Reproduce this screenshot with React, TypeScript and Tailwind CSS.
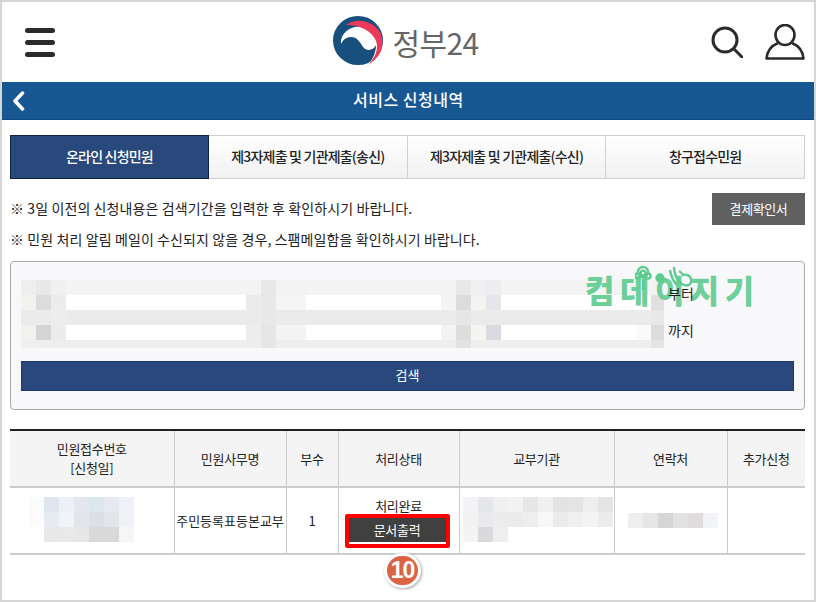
const KR = "font-['Noto_Sans_CJK_KR','Noto_Sans',sans-serif]"

const tabs = ['제3자제출 및 기관제출(송신)', '제3자제출 및 기관제출(수신)', '창구접수민원']

// blurred form fields, 15px mosaic blocks
const formMosaic = [
  ['bg-[#eeeeee]', 'bg-[#e8e8e8]', 'bg-[#f0f0f2]', 'bg-[#f4f4f4]', 'bg-[#f3f3f3]', 'bg-[#e8e8e8]', 'bg-[#f3f3f3]', 'bg-[#f4f4f4]', 'bg-[#f4f4f4]', 'bg-[#e8e8e8]', 'bg-[#f0f0f0]', 'bg-[#ecedf0]', 'bg-[#f4f4f4]', 'bg-[#f4f4f4]', 'bg-[#f2f2f2]'],
  ['bg-[#f2f2ef]', 'bg-[#dcdcdc]', 'bg-[#ececee]', 'bg-white', 'bg-[#ebebeb]', 'bg-[#e8e8e8]', 'bg-[#f5f5f5]', 'bg-white', 'bg-[#f4f4f4]', 'bg-[#dcdcdc]', 'bg-[#f3f3f1]', 'bg-[#e6e6ea]', 'bg-white', 'bg-white', 'bg-[#e0e0e0]'],
  ['bg-[#ebebeb]', 'bg-[#ebebeb]', 'bg-[#ededed]', 'bg-[#ebebeb]', 'bg-[#ebebeb]', 'bg-[#e8e8e8]', 'bg-[#ebebeb]', 'bg-[#ebebeb]', 'bg-[#ebebeb]', 'bg-[#e6e6e6]', 'bg-[#ebebeb]', 'bg-[#ebebeb]', 'bg-[#ebebeb]', 'bg-[#ebebeb]', 'bg-[#e8e8e8]'],
  ['bg-[#f1f1ee]', 'bg-[#d4d4d4]', 'bg-[#ececee]', 'bg-white', 'bg-[#ededed]', 'bg-[#e6e6e6]', 'bg-[#f3f3f3]', 'bg-white', 'bg-[#f3f3f3]', 'bg-[#dddddd]', 'bg-[#f4f4f0]', 'bg-[#dadbe1]', 'bg-white', 'bg-[#fafafa]', 'bg-[#dcdcdc]'],
  ['bg-[#efefef]', 'bg-[#eeeeee]', 'bg-[#eeeeee]', 'bg-[#eeeeee]', 'bg-[#eeeeee]', 'bg-[#e6e6e6]', 'bg-[#eeeeee]', 'bg-[#eeeeee]', 'bg-[#eeeeee]', 'bg-[#e2e2e2]', 'bg-[#eeeeee]', 'bg-[#eeeeee]', 'bg-[#eeeeee]', 'bg-[#eeeeee]', 'bg-[#e4e4e4]'],
]

const receiptMosaic = [
  ['bg-[#fafbfc]', 'bg-[#dfe6ef]', 'bg-[#edf1f6]', 'bg-[#e4e8ee]', 'bg-[#dde5ee]', 'bg-[#e6eaf0]', 'bg-[#eef2f7]', 'bg-white'],
  ['bg-[#fbfbfc]', 'bg-[#e6ebf2]', 'bg-[#f0f3f7]', 'bg-[#e2e5ea]', 'bg-[#dbdfe6]', 'bg-[#e3e5e9]', 'bg-[#eef2f6]', 'bg-white'],
  ['bg-white', 'bg-[#e8e8e8]', 'bg-[#e9e9e9]', 'bg-[#e7e7e6]', 'bg-[#d9d9d9]', 'bg-[#d9d9d9]', 'bg-[#f6f6f6]', 'bg-white'],
]

const orgMosaic = [
  ['bg-[#f4f4f6]', 'bg-[#e6e7ea]', 'bg-[#f0f0f1]', 'bg-[#f2f2f2]', 'bg-[#e6e6e6]', 'bg-[#f0f0f0]', 'bg-[#e3e3e3]', 'bg-[#e4e4e4]', 'bg-[#eeeef0]', 'bg-[#e4e4e4]'],
  ['bg-[#f2f2f3]', 'bg-[#eaeaec]', 'bg-[#ececec]', 'bg-[#ebebea]', 'bg-[#eeeeee]', 'bg-[#f8f8f8]', 'bg-[#ebebeb]', 'bg-[#f0f0f0]', 'bg-[#f4f4f6]', 'bg-[#ececec]'],
  ['bg-[#f4f4f5]', 'bg-[#dadadc]', 'bg-[#eeeeee]', 'bg-white', 'bg-white', 'bg-white', 'bg-white', 'bg-white', 'bg-white', 'bg-white'],
]

const phoneMosaic = [['bg-[#eeeeee]', 'bg-[#e6e6e6]', 'bg-[#d6d6d6]', 'bg-[#e2e2e2]', 'bg-[#dedcdc]', 'bg-[#f2f3f6]']]

function Mosaic({ rows }: { rows: string[][] }) {
  return (
    <div className="flex flex-col">
      {rows.map((row, i) => (
        <div key={i} className="flex">
          {row.map((c, j) => (
            <div key={j} className={`h-[15px] w-[15px] ${c}`} />
          ))}
        </div>
      ))}
    </div>
  )
}

function FormMosaic() {
  const widths = ['w-[15px]', 'w-[15px]', 'w-[15px]', 'w-[180px]', 'w-[15px]', 'w-[15px]', 'w-[30px]', 'w-[135px]', 'w-[15px]', 'w-[15px]', 'w-[15px]', 'w-[15px]', 'w-[135px]', 'w-[15px]', 'w-[13px]']
  const heights = ['h-[15px]', 'h-[15px]', 'h-[15px]', 'h-[15px]', 'h-[8px]']
  return (
    <div className="flex flex-col">
      {formMosaic.map((row, i) => (
        <div key={i} className="flex">
          {row.map((c, j) => (
            <div key={j} className={`${widths[j]} ${heights[i]} ${c}`} />
          ))}
        </div>
      ))}
    </div>
  )
}

function Logo() {
  return (
    <div className="flex items-center gap-[9px]">
      <svg width="50" height="49" viewBox="0 0 50 49">
        <ellipse cx="25" cy="24.5" rx="25" ry="24.5" fill="#174f7e" />
        <path d="M8 28C7 17 18 9 29 11C38 13 46 23 45 30C44 38 41 43 36 48C41 41 43 35 43 29C41 34 34 36 30 31C27 26 24 21 18 21C13 21 10 24 8 28Z" fill="#ffffff" />
        <path d="M13 9C24 1 40 5 47 16C52 27 50 40 35 49C42 42 46 33 43 25C39 14 24 8 13 9Z" fill="#ee3a5a" />
      </svg>
      <span className="mt-[4px] text-[30px] leading-none tracking-[-0.6px] text-[#666666]">정부24</span>
    </div>
  )
}

function Watermark() {
  return (
    <div className="absolute left-[583px] top-[263px] h-[46px] w-[176px]">
      <span className="absolute left-0 top-[2px] text-[32px] leading-[44px] font-black tracking-[5.5px] whitespace-nowrap text-[#5ecb8f] opacity-90">컴데이지기</span>
      <svg className="absolute left-[50px] top-0" width="60" height="26" viewBox="0 0 60 26" fill="none" stroke="#5ecb8f" strokeWidth="2.4">
        <circle cx="8" cy="8" r="2.4" />
        <circle cx="8" cy="7" r="5" />
        <circle cx="3" cy="11" r="2.6" />
        <circle cx="13" cy="11" r="2.6" />
        <path d="M8 14v11" />
        <circle cx="25" cy="13" r="3.5" fill="#5ecb8f" />
        <path d="M39 2c0 7 2 12 8 17 5 3 10 1 9-5-1-4-5-5-8-4-2-3-4-4-4-4M35 5c1 6 3 11 7 15" />
      </svg>
    </div>
  )
}

const colHeads = [
  { w: 'w-[164px]', label: ['민원접수번호', '[신청일]'] },
  { w: 'w-[112px]', label: ['민원사무명'] },
  { w: 'w-[52px]', label: ['부수'] },
  { w: 'w-[121px]', label: ['처리상태'] },
  { w: 'w-[155px]', label: ['교부기관'] },
  { w: 'w-[113px]', label: ['연락처'] },
  { w: 'w-[78px]', label: ['추가신청'] },
]

export default function App() {
  return (
    <div className={`${KR} relative h-[602px] w-[816px] overflow-hidden border-2 border-[#d6d6d6] bg-white text-[#222222]`}>
      {/* Header */}
      <header className="flex h-[80px] items-center justify-between pl-[23px] pr-[9px]">
        <div className="flex w-[30px] flex-col gap-[7px]">
          <span className="h-[5px] rounded-full bg-[#2b2b2b]" />
          <span className="h-[5px] rounded-full bg-[#2b2b2b]" />
          <span className="h-[5px] rounded-full bg-[#2b2b2b]" />
        </div>
        <div className="mb-[4px] ml-[46px]">
          <Logo />
        </div>
        <div className="flex items-center gap-[22px]">
          <svg width="32" height="32" viewBox="0 0 32 32" fill="none" stroke="#2b2b2b" strokeWidth="3" strokeLinecap="round">
            <circle cx="14" cy="14" r="12" />
            <path d="M23 23l8 8" />
          </svg>
          <svg width="40" height="36" viewBox="0 0 40 36" fill="none" stroke="#2b2b2b" strokeWidth="2.6" strokeLinejoin="round">
            <ellipse cx="20" cy="11" rx="9.5" ry="10" />
            <path d="M13 19C6 22 2 28 1.500 34.500h37C38 28 34 22 27 19" />
          </svg>
        </div>
      </header>

      {/* Title bar */}
      <div className="flex h-[38px] items-center border-b border-b-[#0f4a80] bg-[#175893] pl-[10px]">
        <svg width="13" height="20" viewBox="0 0 13 20" fill="none" stroke="#ffffff" strokeWidth="3.500" strokeLinecap="round" strokeLinejoin="round">
          <path d="M10.500 2L3 10l7.500 8" />
        </svg>
        <h1 className="ml-[328px] pb-[3px] text-[16px] font-medium tracking-[0.5px] text-white">서비스 신청내역</h1>
      </div>

      <main className="pl-[8px] pr-[9px]">
        {/* Tabs */}
        <div className="mt-[15px] flex h-[44px] text-[14px] tracking-[-0.8px]">
          <div className="flex w-[199px] items-center justify-center border border-[#10223f] bg-[#29497c] pb-[1px] font-medium text-white">온라인 신청민원</div>
          {tabs.map((t) => (
            <div key={t} className="flex flex-1 items-center justify-center border border-l-0 border-[#d0d0d0] bg-gradient-to-b from-white to-[#f1f1f1] pb-[1px] font-medium text-[#222222]">
              {t}
            </div>
          ))}
        </div>

        {/* Notes */}
        <div className="mt-[14px] flex items-start justify-between">
          <div className="text-[14px] tracking-[0.1px] text-[#222222]">
            <p className="mt-[5px] leading-[20px]">※ 3일 이전의 신청내용은 검색기간을 입력한 후 확인하시기 바랍니다.</p>
            <p className="mt-[11px] leading-[20px]">※ 민원 처리 알림 메일이 수신되지 않을 경우, 스팸메일함을 확인하시기 바랍니다.</p>
          </div>
          <div className="flex h-[32px] w-[93px] items-center justify-center bg-[#606060] text-[13px] tracking-[-0.4px] text-white">결제확인서</div>
        </div>

        {/* Search panel */}
        <section className="mt-[12px] h-[149px] rounded-[4px] border border-[#aaaaaa] bg-[#f8f8fa] px-[10px] pt-[18px]">
          <div className="flex">
            <FormMosaic />
            <div className="relative z-10 ml-[4px] flex flex-col text-[14px] text-[#222222]">
              <span className="mt-[3px] leading-[20px]">부터</span>
              <span className="mt-[17px] leading-[20px]">까지</span>
            </div>
          </div>
          <div className="mt-[13px] flex h-[30px] items-center justify-center border border-[#163a72] bg-[#29497c] pb-[2px] text-[13px] text-white">검색</div>
        </section>

        {/* Result table */}
        <table className="mt-[19px] w-[795px] table-fixed border-collapse border-t-2 border-t-[#222222] text-[13px] tracking-[-0.3px]">
          <thead>
            <tr className="h-[57px] border-b-2 border-b-[#cccccc] bg-[#f4f4f4]">
              {colHeads.map((c, i) => (
                <th key={i} className={`${c.w} ${i < 6 ? 'border-r border-r-[#cccccc]' : ''} pb-[1px] text-center font-normal leading-[19px]`}>
                  {c.label.map((l) => (
                    <div key={l}>{l}</div>
                  ))}
                </th>
              ))}
            </tr>
          </thead>
          <tbody>
            <tr className="h-[67px] border-b-2 border-b-[#cccccc]">
              <td className="border-r border-r-[#cccccc] pb-[2px]">
                <div className="flex justify-center pr-[5px]">
                  <Mosaic rows={receiptMosaic} />
                </div>
              </td>
              <td className="whitespace-nowrap border-r border-r-[#cccccc] text-center tracking-[0px]">주민등록표등본교부</td>
              <td className="border-r border-r-[#cccccc] text-center">1</td>
              <td className="border-r border-r-[#cccccc] pt-[4px]">
                <div className="flex flex-col items-center">
                  <span className="leading-[16px]">처리완료</span>
                  <div className="-ml-[3px] h-[34px] w-[105px] rounded-[2px] border-[4px] border-[#ff0000]">
                    <div className="flex h-[26px] items-center justify-center border-b-2 border-b-white bg-[#404040] text-white">문서출력</div>
                  </div>
                </div>
              </td>
              <td className="border-r border-r-[#cccccc] pb-[3px] pl-[3px]">
                <Mosaic rows={orgMosaic} />
              </td>
              <td className="border-r border-r-[#cccccc] pl-[13px]">
                <Mosaic rows={phoneMosaic} />
              </td>
              <td />
            </tr>
          </tbody>
        </table>
      </main>

      <Watermark />

      {/* Step badge */}
      <div className="absolute left-[382px] top-[551px] flex h-[35px] w-[37px] items-center justify-center rounded-full border-[3px] border-white bg-[#db6443] font-['Liberation_Sans',sans-serif] text-[23px] font-bold tracking-[-1px] text-white shadow-[1px_1px_3px_rgba(0,0,0,0.35)]">
        10
      </div>
    </div>
  )
}
